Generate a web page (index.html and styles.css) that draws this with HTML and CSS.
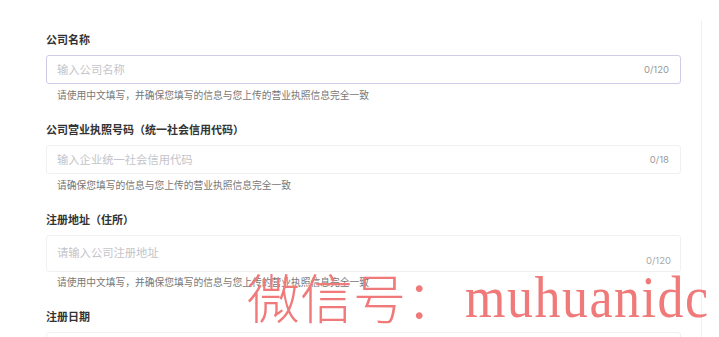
FILE: index.html
```html
<!DOCTYPE html>
<html lang="zh-CN">
<head>
    <meta charset="UTF-8">
    <meta name="viewport" content="width=device-width, initial-scale=1.0">
    <title>企业信息</title>
    <link rel="stylesheet" href="styles.css">
</head>
<body>

    <div class="page">
        <form class="form">
            <div class="field">
                <label class="label">公司名称</label>
                <div class="control focused">
                    <input type="text" placeholder="输入公司名称">
                    <span class="count">0/120</span>
                </div>
                <p class="help">请使用中文填写，并确保您填写的信息与您上传的营业执照信息完全一致</p>
            </div>

            <div class="field">
                <label class="label">公司营业执照号码（统一社会信用代码）</label>
                <div class="control">
                    <input type="text" placeholder="输入企业统一社会信用代码">
                    <span class="count">0/18</span>
                </div>
                <p class="help">请确保您填写的信息与您上传的营业执照信息完全一致</p>
            </div>

            <div class="field">
                <label class="label">注册地址（住所）</label>
                <div class="control area">
                    <textarea placeholder="请输入公司注册地址"></textarea>
                    <span class="count">0/120</span>
                </div>
                <p class="help short">请使用中文填写，并确保您填写的信息与您上传的营业执照信息完全一致</p>
            </div>

            <div class="field">
                <label class="label">注册日期</label>
                <div class="control">
                    <input type="text">
                </div>
            </div>
        </form>
        <div class="side"></div>
    </div>

    <div class="watermark"><span class="wm-cn">微信号：</span><span class="wm-en">muhuanidc</span></div>

</body>
</html>
```

FILE: styles.css
```css
body {
    margin: 0;
    padding: 0;
    background: #fff;
    font-family: 'Inter', 'Noto Sans CJK SC', sans-serif;
    overflow: hidden;
}

.page {
    display: flex;
    height: 100vh;
    overflow: hidden;
}

.form {
    width: 701px;
    box-sizing: border-box;
    padding: 32px 20px 0 46px;
    margin: 0;
}

.side {
    flex: 1;
    margin-top: 20px;
    border-left: 1px solid #f0f0f4;
}

.field {
    margin-bottom: 19px;
}

.label {
    display: block;
    font-size: 11px;
    line-height: 16px;
    font-weight: bold;
    color: #333;
    margin-bottom: 7px;
}

.control {
    display: flex;
    align-items: center;
    height: 29px;
    box-sizing: border-box;
    border: 1px solid #f0f0f2;
    border-radius: 3px;
    padding: 0 11px 0 10px;
    background: #fff;
    position: relative;
}

.control.focused {
    border-color: #cfcce8;
}

.control input,
.control textarea {
    flex: 1;
    border: none;
    outline: none;
    padding: 0;
    margin: 0;
    background: transparent;
    font-family: 'Inter', 'Noto Sans CJK SC', sans-serif;
    font-size: 11.3px;
    color: #333;
}

.control input::placeholder,
.control textarea::placeholder {
    color: #c4c4ca;
}

.control.area {
    height: 37px;
    align-items: flex-start;
    padding-top: 8px;
}

.control textarea {
    height: 18px;
    line-height: 18px;
    resize: none;
    overflow: hidden;
}

.count {
    font-size: 9.5px;
    color: #999;
}

.area .count {
    position: absolute;
    right: 9px;
    bottom: 5px;
    color: #aaa;
}

.help {
    margin: 5px 0 0 11px;
    font-size: 9.75px;
    line-height: 14px;
    color: #777;
}

.help.short {
    margin-top: 4px;
}

.watermark {
    position: fixed;
    left: 247px;
    top: 266px;
    line-height: 60px;
    color: #f07a7a;
    white-space: nowrap;
    pointer-events: none;
}

.wm-cn {
    font-family: 'Noto Sans CJK SC', serif;
    font-weight: 300;
    font-size: 53px;
}

.wm-en {
    display: inline-block;
    margin-left: 6px;
    font-family: 'Liberation Serif', serif;
    font-size: 52px;
    letter-spacing: 1.5px;
    transform: scaleY(1.12);
    transform-origin: bottom;
}
```
